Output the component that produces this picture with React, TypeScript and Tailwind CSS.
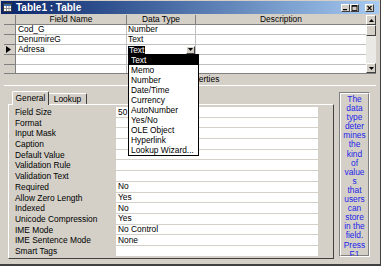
import React from 'react';

const rows = [
  { name: 'Cod_G', type: 'Number', current: false },
  { name: 'DenumireG', type: 'Text', current: false },
  { name: 'Adresa', type: 'Text', current: true },
  { name: '', type: '', current: false },
  { name: '', type: '', current: false },
];

const dataTypes = [
  'Text',
  'Memo',
  'Number',
  'Date/Time',
  'Currency',
  'AutoNumber',
  'Yes/No',
  'OLE Object',
  'Hyperlink',
  'Lookup Wizard...',
];

const fieldProps: [string, string][] = [
  ['Field Size', '50'],
  ['Format', ''],
  ['Input Mask', ''],
  ['Caption', ''],
  ['Default Value', ''],
  ['Validation Rule', ''],
  ['Validation Text', ''],
  ['Required', 'No'],
  ['Allow Zero Length', 'Yes'],
  ['Indexed', 'No'],
  ['Unicode Compression', 'Yes'],
  ['IME Mode', 'No Control'],
  ['IME Sentence Mode', 'None'],
  ['Smart Tags', ''],
];

const helpLines = ['The', 'data', 'type', 'deter', 'mines', 'the', 'kind', 'of', 'value', 's', 'that', 'users', 'can', 'store', 'in the', 'field.', 'Press', 'F1'];

const TableIcon = () => (
  <svg width="9" height="9" viewBox="0 0 9 9" className="shrink-0">
    <rect x="0.5" y="0.5" width="8" height="8" fill="#fff" stroke="#3a3a3a" />
    <rect x="1" y="1" width="7" height="2" fill="#3a6ea5" />
    <path d="M1 5.5H8M3.5 3V8M6 3V8" stroke="#808080" strokeWidth="0.8" />
  </svg>
);

const CaptionButton: React.FC<{ kind: 'min' | 'max' | 'close' }> = ({ kind }) => (
  <div className="w-[9px] h-[8px] bg-[#d4d0c8] border border-t-white border-l-white border-r-[#404040] border-b-[#404040] flex items-center justify-center">
    <svg width="7" height="6" viewBox="0 0 7 6">
      {kind === 'min' && <rect x="1" y="4" width="4" height="1.2" fill="#000" />}
      {kind === 'max' && (
        <>
          <rect x="1" y="0.5" width="5" height="5" fill="none" stroke="#000" strokeWidth="0.8" />
          <rect x="1" y="0.5" width="5" height="1.2" fill="#000" />
        </>
      )}
      {kind === 'close' && <path d="M1.5 0.8L5.5 5.2M5.5 0.8L1.5 5.2" stroke="#000" strokeWidth="1.2" />}
    </svg>
  </div>
);

const ArrowBtn: React.FC<{ up?: boolean; className?: string }> = ({ up, className }) => (
  <div className={`bg-[#d4d0c8] border border-t-white border-l-white border-r-[#404040] border-b-[#404040] flex items-center justify-center ${className ?? ''}`}>
    <svg width="5" height="3" viewBox="0 0 5 3">
      <path d={up ? 'M0 3L2.5 0L5 3Z' : 'M0 0L5 0L2.5 3Z'} fill="#000" />
    </svg>
  </div>
);

export default function App() {
  return (
    <div className="relative w-[381px] h-[266px] overflow-hidden bg-[#d4d0c8] flex flex-col pt-[1px] font-['Liberation_Sans',Arial,sans-serif] text-[8.4px] text-black border-b-[2px] border-r border-[#404040]">
      {/* title bar */}
      <div className="mx-[1px] h-[13px] shrink-0 flex items-center bg-gradient-to-r from-[#0a246a] to-[#a6caf0] pl-[2px] pr-[5px]">
        <TableIcon />
        <span className="ml-[4px] text-[10px] font-bold text-white leading-none">Table1 : Table</span>
        <div className="ml-auto flex items-center">
          <CaptionButton kind="min" />
          <CaptionButton kind="max" />
          <div className="ml-[6px]">
            <CaptionButton kind="close" />
          </div>
        </div>
      </div>

      {/* field grid */}
      <div className="mx-[4px] mt-[1px] h-[58px] shrink-0 flex overflow-hidden">
        <div className="w-[362px] flex flex-col bg-white">
          <div className="flex h-[10px] shrink-0">
            <div className="w-[12px] bg-[#d4d0c8] border-r border-b border-[#808080]" />
            <div className="w-[111px] bg-[#d4d0c8] border-r border-b border-[#808080] flex items-center justify-center">Field Name</div>
            <div className="w-[69px] bg-[#d4d0c8] border-r border-b border-[#808080] flex items-center justify-center">Data Type</div>
            <div className="w-[170px] bg-[#d4d0c8] border-b border-[#808080] flex items-center justify-center">Description</div>
          </div>
          {rows.map((r, i) => (
            <div key={i} className="flex h-[10px] shrink-0">
              <div className="w-[12px] bg-[#d4d0c8] border-r border-b border-[#808080] flex items-center pl-[2px]">
                {r.current && (
                  <svg width="5" height="7" viewBox="0 0 5 7">
                    <path d="M0 0L5 3.5L0 7Z" fill="#000" />
                  </svg>
                )}
              </div>
              <div className="w-[111px] border-r border-b border-[#c0c0c0] flex items-center pl-[2px]">{r.name}</div>
              <div className="w-[69px] border-r border-b border-[#c0c0c0] flex items-center pl-[1px]">
                {r.current ? (
                  <>
                    <span className="bg-black text-white px-[1px] leading-[8px]">Text</span>
                    <ArrowBtn className="ml-auto w-[9px] h-[8px]" />
                  </>
                ) : (
                  r.type
                )}
              </div>
              <div className="w-[170px] border-b border-[#c0c0c0]" />
            </div>
          ))}
        </div>
        {/* scrollbar */}
        <div className="w-[11px] flex flex-col bg-[#ebe9e5]">
          <ArrowBtn up className="h-[10px] shrink-0" />
          <div className="h-[11px] shrink-0 bg-[#d4d0c8] border border-t-white border-l-white border-r-[#404040] border-b-[#404040]" />
          <div className="flex-1" />
          <ArrowBtn className="h-[10px] shrink-0" />
        </div>
      </div>

      {/* field properties bar */}
      <div className="mx-[4px] h-[13px] shrink-0 flex items-center justify-center border-t border-[#808080] border-b border-b-white bg-[#d4d0c8]">
        Field Properties
      </div>

      {/* lower pane */}
      <div className="flex-1 flex pl-[8px] pt-[5px]">
        <div className="w-[326px] flex flex-col">
          <div className="h-[13px] flex items-end pl-[4px] relative z-10">
            <div className="w-[37px] h-[14px] -mb-[1px] bg-[#d4d0c8] border-t border-l border-white border-r border-r-[#404040] rounded-t-[2px] flex items-center justify-center">
              General
            </div>
            <div className="w-[38px] h-[11px] bg-[#d4d0c8] border-t border-white border-r border-r-[#404040] rounded-tr-[2px] flex items-center justify-center">
              Lookup
            </div>
          </div>
          <div className="h-[155px] border-t border-l border-white border-r border-b border-r-[#404040] border-b-[#404040] pl-[5px] pt-[2px] overflow-hidden">
            {fieldProps.map(([label, value]) => (
              <div key={label} className="flex h-[10.7px]">
                <div className="w-[102px] flex items-center pl-[1px]">{label}</div>
                <div className="w-[202px] bg-white border-b border-[#d4d0c8] flex items-center pl-[2px]">{value}</div>
              </div>
            ))}
          </div>
        </div>
        <div className="ml-[5px] mt-[1px] w-[31px] h-[165px] border border-t-[#808080] border-l-[#808080] border-b-white border-r-white overflow-hidden">
          <div className="h-full border border-t-white border-l-white border-r-[#808080] border-b-[#808080] flex flex-col items-center pt-[1px] text-[#2424e8] leading-[9.1px]">
            {helpLines.map((l, i) => (
              <span key={i} className="whitespace-nowrap">{l}</span>
            ))}
          </div>
        </div>
      </div>

      {/* open data type list */}
      <div className="absolute top-[54px] left-[128px] w-[71px] h-[102px] border border-black bg-white z-20 flex flex-col">
        {dataTypes.map((t, i) => (
          <div key={t} className={`h-[10px] shrink-0 flex items-center pl-[2px] ${i === 0 ? 'bg-black text-white' : ''}`}>
            {t}
          </div>
        ))}
      </div>
    </div>
  );
}
